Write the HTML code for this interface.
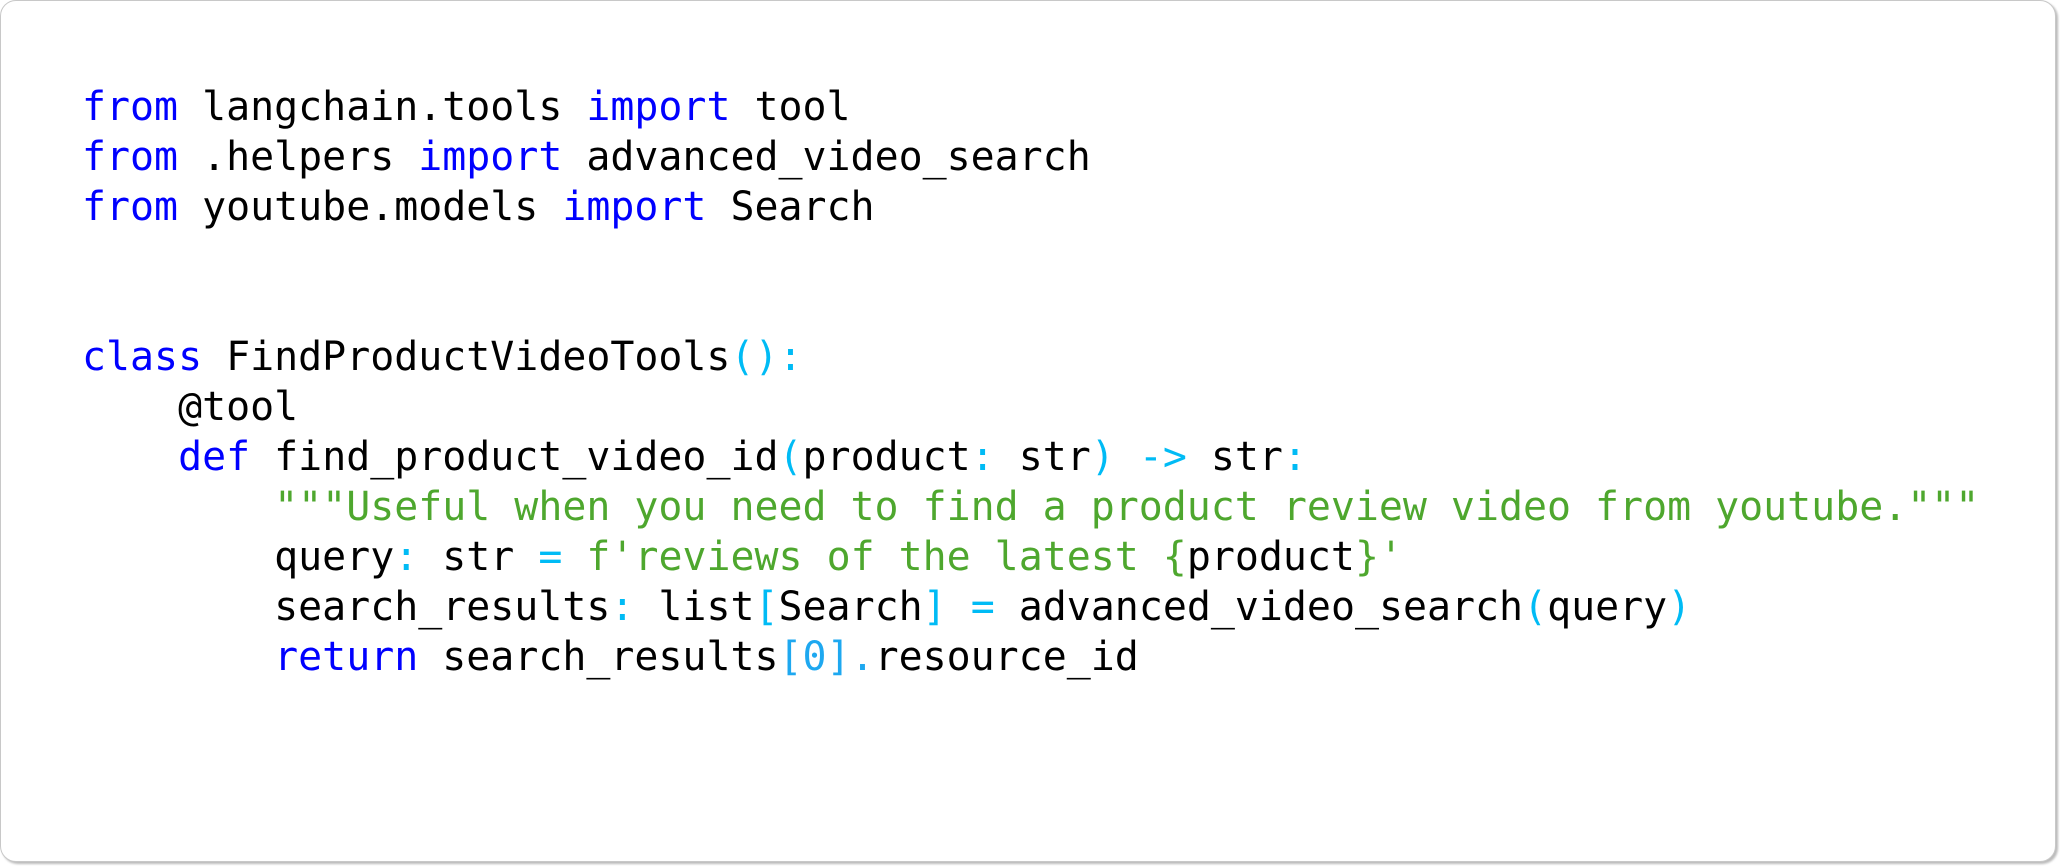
<!DOCTYPE html>
<html><head><meta charset="utf-8"><style>
html,body{margin:0;padding:0;background:#fff;}
body{width:2060px;height:866px;position:relative;overflow:hidden;}
.card{position:absolute;left:0;top:0;width:2056px;height:862px;border:1px solid #c8c8c8;border-radius:16px;box-shadow:2px 2px 2px #bbb;background:#fff;box-sizing:border-box;}
pre{position:absolute;left:82px;top:82px;margin:0;font-family:"DejaVu Sans Mono","Liberation Mono",monospace;font-size:39.9px;line-height:50px;color:#000;}
.k{color:#0000ff}.p{color:#00bbf5}.s{color:#4ea72e}.b{color:#1ea8f0}
</style></head><body><div class="card"></div>
<pre><span class="k">from</span> langchain.tools <span class="k">import</span> tool
<span class="k">from</span> .helpers <span class="k">import</span> advanced_video_search
<span class="k">from</span> youtube.models <span class="k">import</span> Search


<span class="k">class</span> FindProductVideoTools<span class="p">():</span>
    @tool
    <span class="k">def</span> find_product_video_id<span class="p">(</span>product<span class="p">:</span> str<span class="p">)</span> <span class="p">-&gt;</span> str<span class="p">:</span>
        <span class="s">"""Useful when you need to find a product review video from youtube."""</span>
        query<span class="p">:</span> str <span class="p">=</span> <span class="s">f'reviews of the latest {</span>product<span class="s">}'</span>
        search_results<span class="p">:</span> list<span class="p">[</span>Search<span class="p">]</span> <span class="p">=</span> advanced_video_search<span class="p">(</span>query<span class="p">)</span>
        <span class="k">return</span> search_results<span class="b">[0].</span>resource_id</pre>
</body></html>
